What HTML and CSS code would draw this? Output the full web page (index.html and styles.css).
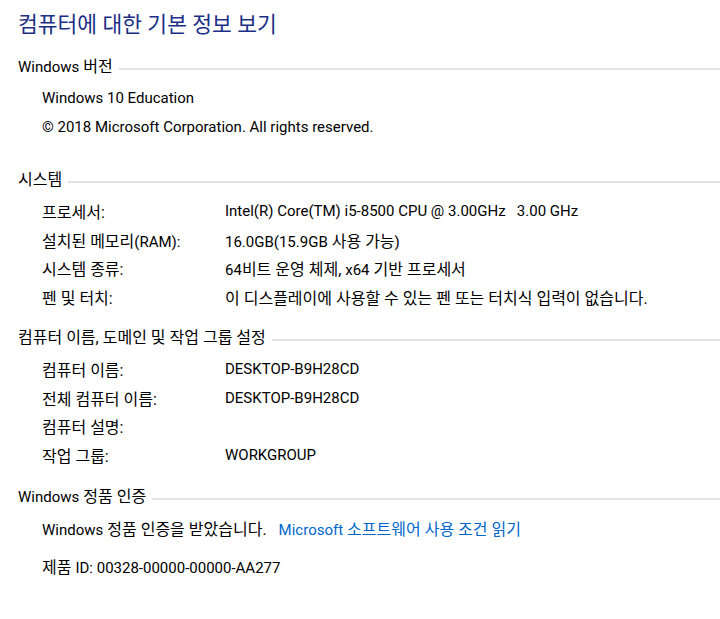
FILE: index.html
```html
<html>
    <head>
        <link rel="stylesheet" href="styles.css">
    </head>
    <body>
        <h1 class="title">컴퓨터에 대한 기본 정보 보기</h1>

        <div class="section section-edition">
            <div class="section-head"><span><span class="en">Windows</span> 버전</span><span class="rule"></span></div>
            <div class="rows">
                <div class="row wide"><span class="en">Windows 10 Education</span></div>
                <div class="row wide"><span class="en">© 2018 Microsoft Corporation. All rights reserved.</span></div>
            </div>
        </div>

        <div class="section section-system">
            <div class="section-head"><span>시스템</span><span class="rule"></span></div>
            <div class="rows">
                <div class="row"><span class="label">프로세서:</span><span class="en">Intel(R) Core(TM) i5-8500 CPU @ 3.00GHz&nbsp;&nbsp;&nbsp;3.00 GHz</span></div>
                <div class="row"><span class="label">설치된 메모리<span class="en">(RAM):</span></span><span><span class="en">16.0GB(15.9GB</span> 사용 가능<span class="en">)</span></span></div>
                <div class="row"><span class="label">시스템 종류:</span><span><span class="en">64</span>비트 운영 체제, <span class="en">x64</span> 기반 프로세서</span></div>
                <div class="row"><span class="label">펜 및 터치:</span><span>이 디스플레이에 사용할 수 있는 펜 또는 터치식 입력이 없습니다.</span></div>
            </div>
        </div>

        <div class="section section-name">
            <div class="section-head"><span>컴퓨터 이름, 도메인 및 작업 그룹 설정</span><span class="rule"></span></div>
            <div class="rows">
                <div class="row"><span class="label">컴퓨터 이름:</span><span class="en">DESKTOP-B9H28CD</span></div>
                <div class="row"><span class="label">전체 컴퓨터 이름:</span><span class="en">DESKTOP-B9H28CD</span></div>
                <div class="row"><span class="label">컴퓨터 설명:</span><span></span></div>
                <div class="row"><span class="label">작업 그룹:</span><span class="en">WORKGROUP</span></div>
            </div>
        </div>

        <div class="section section-activation">
            <div class="section-head"><span><span class="en">Windows</span> 정품 인증</span><span class="rule"></span></div>
            <div class="rows">
                <div class="row wide activation"><span><span class="en">Windows</span> 정품 인증을 받았습니다.</span><a href="#"><span class="en">Microsoft</span> 소프트웨어 사용 조건 읽기</a></div>
                <div class="row wide product-id"><span>제품 <span class="en">ID: 00328-00000-00000-AA277</span></span></div>
            </div>
        </div>
    </body>
</html>
```

FILE: styles.css
```css
body {
    margin: 0;
    background: #ffffff;
    color: #000000;
    font-family: Roboto, "Noto Sans CJK KR", sans-serif;
    font-size: 16px;
}
a {
    text-decoration: none;
    color: #0066cc;
}
.en {
    font-size: 15px;
}
.title {
    margin: 10px 0 15px 18px;
    font-size: 21.5px;
    font-weight: normal;
    line-height: 30px;
    color: #1b3085;
}
.section-head {
    display: flex;
    align-items: center;
    gap: 6px;
    padding-left: 18px;
    line-height: 24px;
}
.rule {
    flex: 1;
    height: 2px;
    margin-top: 3px;
    background: #e2e2e2;
}
.rows {
    padding: 5px 0 0 42px;
}
.row {
    display: grid;
    grid-template-columns: 183px 1fr;
    height: 28.5px;
    align-items: center;
    white-space: nowrap;
}
.row.wide {
    display: flex;
    gap: 12px;
}
.row.product-id {
    margin-top: 9px;
}
.section-edition {
    margin-bottom: 27px;
}
.section-system {
    margin-bottom: 15px;
}
.section-name {
    margin-bottom: 16px;
}
```
